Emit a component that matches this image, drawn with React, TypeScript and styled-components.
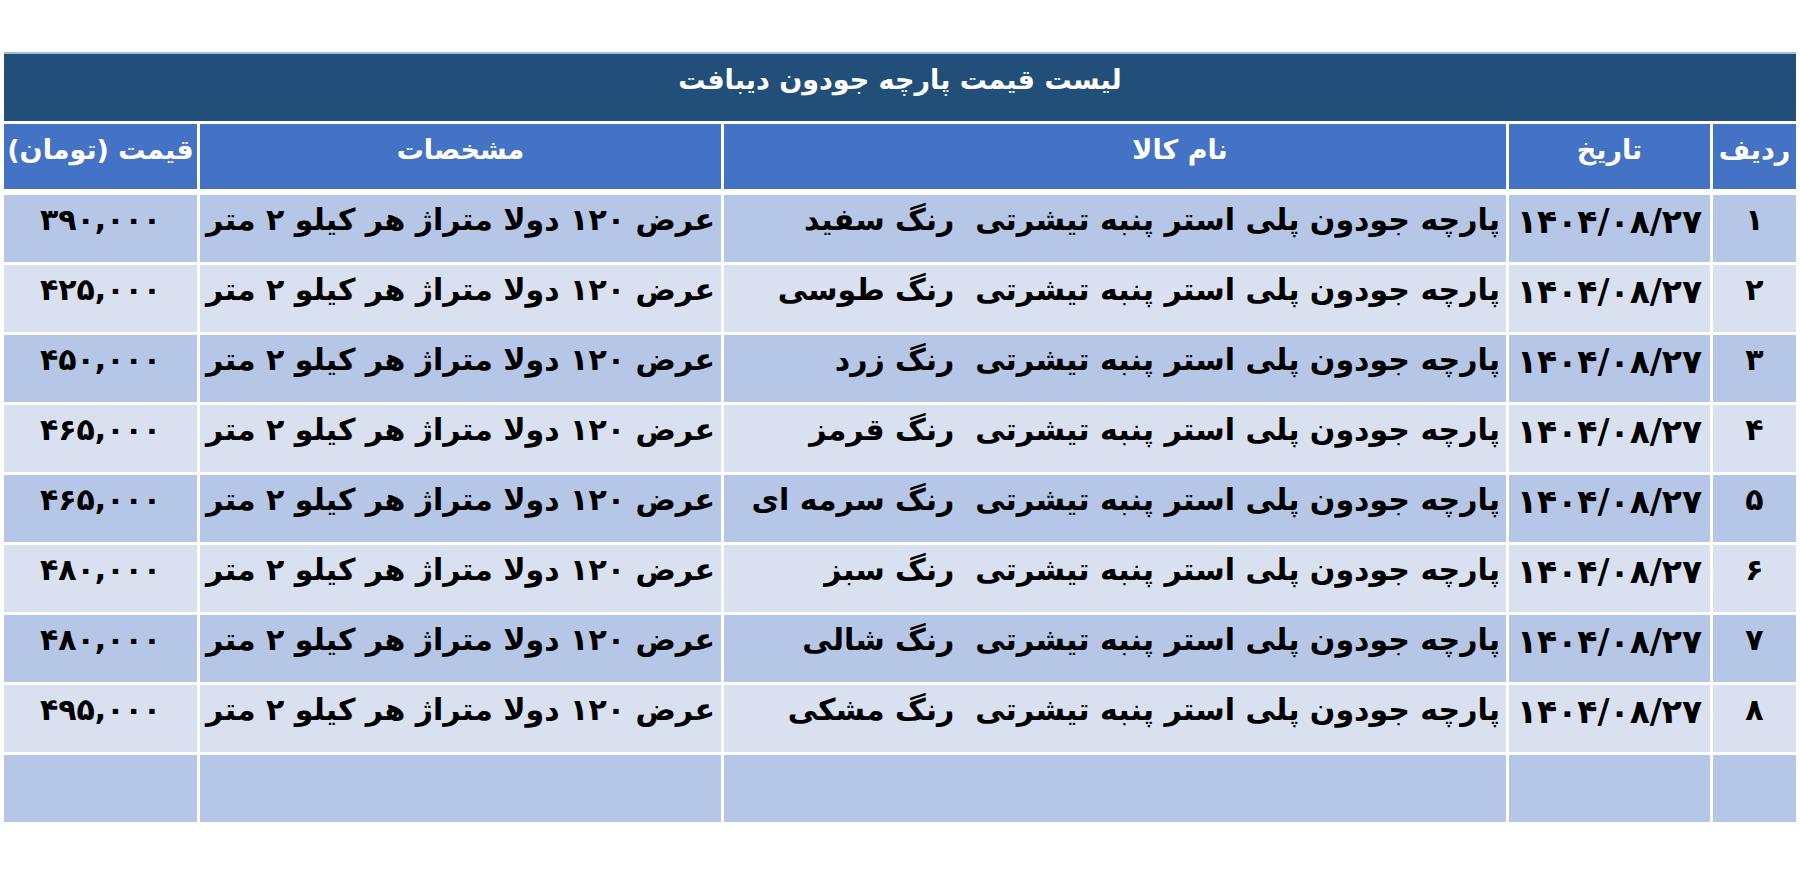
import React from 'react';
import styled, { createGlobalStyle } from 'styled-components';

// -- 전역 스타일 --
const GlobalStyle = createGlobalStyle`
  html, body {
    margin: 0;
    padding: 0;
    background: #ffffff;
  }
  body {
    font-family: "DejaVu Sans", sans-serif;
  }
`;

// -- 데이터 --
interface PriceRow {
  id: string;
  date: string;
  name: string;
  spec: string;
  price: string;
}

const DATE = '۱۴۰۴/۰۸/۲۷';
const NAME_PREFIX = 'پارچه جودون پلی استر پنبه تیشرتی  رنگ ';
const SPEC = 'عرض ۱۲۰ دولا متراژ هر کیلو ۲ متر';

const rows: PriceRow[] = [
  { id: '۱', date: DATE, name: NAME_PREFIX + 'سفید', spec: SPEC, price: '۳۹۰,۰۰۰' },
  { id: '۲', date: DATE, name: NAME_PREFIX + 'طوسی', spec: SPEC, price: '۴۲۵,۰۰۰' },
  { id: '۳', date: DATE, name: NAME_PREFIX + 'زرد', spec: SPEC, price: '۴۵۰,۰۰۰' },
  { id: '۴', date: DATE, name: NAME_PREFIX + 'قرمز', spec: SPEC, price: '۴۶۵,۰۰۰' },
  { id: '۵', date: DATE, name: NAME_PREFIX + 'سرمه ای', spec: SPEC, price: '۴۶۵,۰۰۰' },
  { id: '۶', date: DATE, name: NAME_PREFIX + 'سبز', spec: SPEC, price: '۴۸۰,۰۰۰' },
  { id: '۷', date: DATE, name: NAME_PREFIX + 'شالی', spec: SPEC, price: '۴۸۰,۰۰۰' },
  { id: '۸', date: DATE, name: NAME_PREFIX + 'مشکی', spec: SPEC, price: '۴۹۵,۰۰۰' },
];

type Align = 'center' | 'right';

// -- 스타일 컴포넌트 --
const Page = styled.div`
  padding: 52px 4px 0 4px;
`;

const Table = styled.div`
  direction: rtl;
  width: 1792px;
  display: flex;
  flex-direction: column;
  gap: 3px;
`;

const TitleBar = styled.div`
  height: 69px;
  border-top: 2px solid #9fbde0;
  background: #224f7a;
  color: #ffffff;
  font-weight: bold;
  font-size: 27px;
  display: flex;
  justify-content: center;
  padding-top: 10px;
  box-sizing: border-box;
`;

const Grid = styled.div<{ $header?: boolean }>`
  display: grid;
  grid-template-columns: 83px 201px 782px 521px 193px;
  column-gap: 3px;
  margin-bottom: ${(props): number => (props.$header ? 3 : 0)}px;
`;

const HeadCell = styled.div<{ $offset?: number }>`
  height: 65px;
  background: #4472c4;
  color: #ffffff;
  font-weight: bold;
  font-size: 27px;
  display: flex;
  justify-content: center;
  padding-top: 10px;
  padding-left: ${(props): number => props.$offset ?? 0}px;
  box-sizing: border-box;
  white-space: nowrap;
`;

const Cell = styled.div<{ $odd: boolean; $align: Align; $size?: number }>`
  height: 67px;
  background: ${(props): string => (props.$odd ? '#b5c6e6' : '#d9e1f0')};
  color: #000000;
  font-weight: bold;
  font-size: ${(props): number => props.$size ?? 30}px;
  display: flex;
  justify-content: ${(props): string =>
    props.$align === 'right' ? 'flex-start' : 'center'};
  align-items: flex-start;
  padding: 7px 6px 0 6px;
  box-sizing: border-box;
  white-space: pre;
  overflow: hidden;
`;

const App: React.FC = () => {
  return (
    <>
      <GlobalStyle />
      <Page>
        <Table>
          <TitleBar>لیست قیمت پارچه جودون دیبافت</TitleBar>
          <Grid $header>
            <HeadCell>ردیف</HeadCell>
            <HeadCell>تاریخ</HeadCell>
            <HeadCell $offset={130}>نام کالا</HeadCell>
            <HeadCell>مشخصات</HeadCell>
            <HeadCell>قیمت (تومان)</HeadCell>
          </Grid>
          {rows.map((row, index) => {
            const odd = index % 2 === 0;
            return (
              <Grid key={row.id}>
                <Cell $odd={odd} $align="center">
                  {row.id}
                </Cell>
                <Cell $odd={odd} $align="center" $size={33}>
                  {row.date}
                </Cell>
                <Cell $odd={odd} $align="right">
                  {row.name}
                </Cell>
                <Cell $odd={odd} $align="right">
                  {row.spec}
                </Cell>
                <Cell $odd={odd} $align="center">
                  {row.price}
                </Cell>
              </Grid>
            );
          })}
          <Grid>
            <Cell $odd $align="center" />
            <Cell $odd $align="center" />
            <Cell $odd $align="center" />
            <Cell $odd $align="center" />
            <Cell $odd $align="center" />
          </Grid>
        </Table>
      </Page>
    </>
  );
};

export default App;
